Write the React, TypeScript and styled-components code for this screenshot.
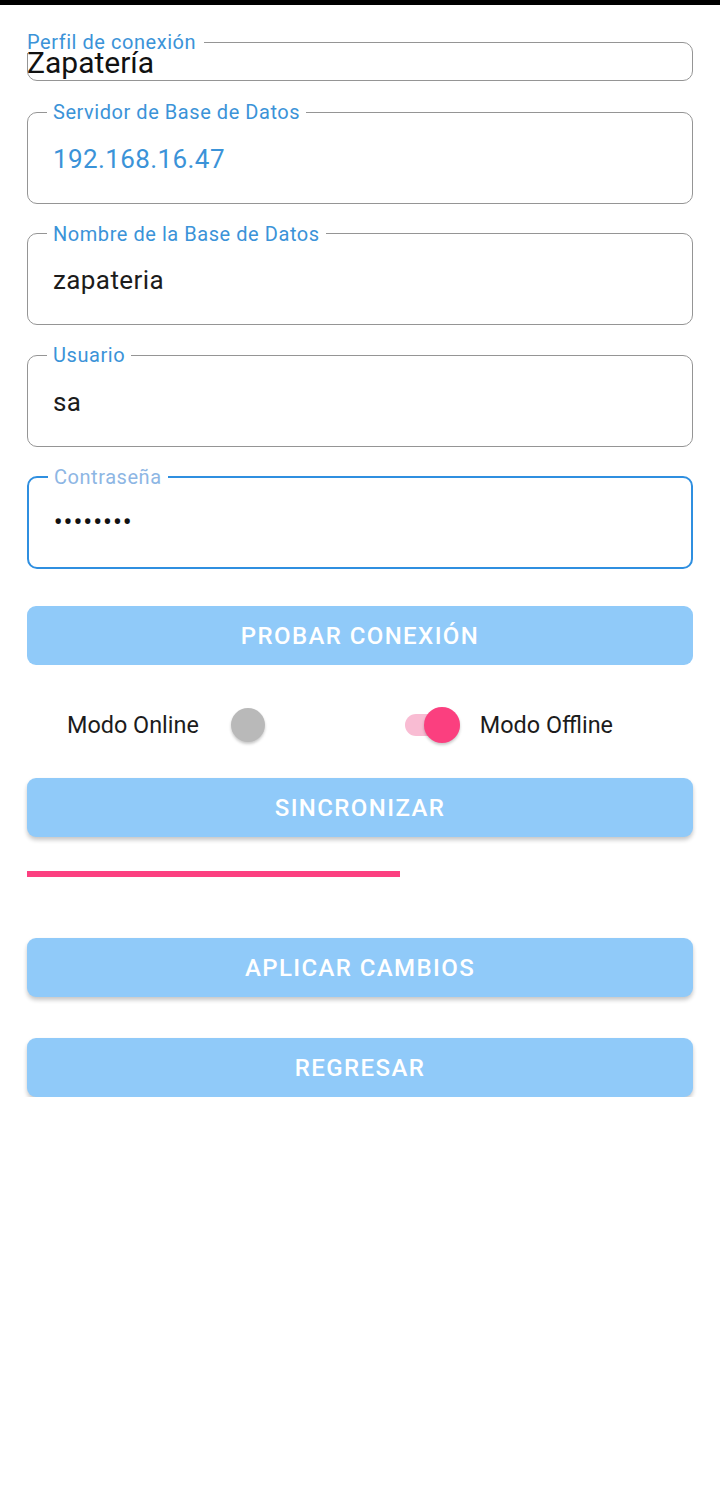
import React from 'react';
import styled, { createGlobalStyle } from 'styled-components';

const GlobalStyle = createGlobalStyle`
  html, body {
    margin: 0;
    padding: 0;
    background: #ffffff;
    font-family: Roboto, "Noto Sans", Arial, sans-serif;
  }
`;

const StatusStrip = styled.div`
  height: 5px;
  background: #000000;
`;

const Page = styled.div`
  padding: 26px 27px 0;
  display: flex;
  flex-direction: column;
`;

const Field = styled.fieldset<{ $focused?: boolean; $gap: number }>`
  margin: 0 0 ${(p) => p.$gap}px;
  padding: 0;
  min-width: 0;
  border: ${(p) => (p.$focused ? '2.5px solid #2f8fe0' : '1.5px solid #959595')};
  border-radius: 10px;
`;

const Legend = styled.legend<{ $faded?: boolean; $flush?: boolean }>`
  margin-left: ${(p) => (p.$flush ? '-1px' : '19px')};
  padding: ${(p) => (p.$flush ? '0 8px 0 0' : '0 6px')};
  font-size: 20px;
  line-height: 22px;
  color: ${(p) => (p.$faded ? '#8db6e4' : '#3b93d8')};
  letter-spacing: 0.55px;
`;

const Value = styled.div<{ $blue?: boolean }>`
  margin: 20.5px 0 29px;
  padding-left: 25px;
  font-size: 26px;
  line-height: 30px;
  color: ${(p) => (p.$blue ? '#3b93d8' : '#1c1c1c')};
  letter-spacing: 0.4px;
`;

const ProfileValue = styled.div`
  margin: -7px 0 0 -1px;
  font-size: 30px;
  line-height: 34px;
  color: #111111;
`;

const Dots = styled.div`
  margin: 20.5px 0 29px;
  padding-left: 25px;
  font-size: 23px;
  line-height: 30px;
  letter-spacing: 1.6px;
  font-weight: 700;
  color: #111111;
`;

const Button = styled.button<{ $raised?: boolean; $gap: number }>`
  height: 59px;
  margin: 0 0 ${(p) => p.$gap}px;
  border: none;
  border-radius: 9px;
  background: #90caf9;
  color: #ffffff;
  font-family: Roboto, "Noto Sans", Arial, sans-serif;
  font-size: 24px;
  font-weight: 500;
  letter-spacing: 1.4px;
  box-shadow: ${(p) => (p.$raised ? '0 3px 4px rgba(0, 0, 0, 0.22)' : 'none')};
`;

const ModeRow = styled.div`
  height: 40px;
  margin-bottom: 33px;
  padding: 0 80px 0 40px;
  display: flex;
  align-items: center;
  justify-content: space-between;
`;

const ModeGroup = styled.div<{ $gap: number }>`
  display: flex;
  align-items: center;
  gap: ${(p) => p.$gap}px;
`;

const ModeLabel = styled.span`
  font-size: 23.4px;
  color: #1c1c1c;
`;

const SwitchTrack = styled.div<{ $on?: boolean }>`
  width: 55px;
  height: 22px;
  border-radius: 11px;
  background: ${(p) => (p.$on ? '#f9bcd3' : 'transparent')};
  display: flex;
  align-items: center;
  justify-content: ${(p) => (p.$on ? 'flex-end' : 'flex-start')};
`;

const Thumb = styled.div<{ $on?: boolean }>`
  width: ${(p) => (p.$on ? 36 : 34)}px;
  height: ${(p) => (p.$on ? 36 : 34)}px;
  border-radius: 50%;
  background: ${(p) => (p.$on ? '#fb3f7f' : '#b9b9b9')};
  box-shadow: 0 2px 3px rgba(0, 0, 0, 0.22);
`;

const Progress = styled.div`
  height: 6px;
  margin-bottom: 61px;
`;

const ProgressFill = styled.div`
  height: 100%;
  background: #fc4080;
`;

const Toggle = ({ on }: { on?: boolean }) => (
  <SwitchTrack $on={on}>
    <Thumb $on={on} />
  </SwitchTrack>
);

export default function App() {
  const progress = 56;
  return (
    <>
      <GlobalStyle />
      <StatusStrip />
      <Page>
        <Field $gap={20}>
          <Legend $flush>Perfil de conexión</Legend>
          <ProfileValue>Zapatería</ProfileValue>
        </Field>
        <Field $gap={19}>
          <Legend>Servidor de Base de Datos</Legend>
          <Value $blue>192.168.16.47</Value>
        </Field>
        <Field $gap={19}>
          <Legend>Nombre de la Base de Datos</Legend>
          <Value>zapateria</Value>
        </Field>
        <Field $gap={19}>
          <Legend>Usuario</Legend>
          <Value>sa</Value>
        </Field>
        <Field $focused $gap={37}>
          <Legend $faded>Contraseña</Legend>
          <Dots>••••••••</Dots>
        </Field>
        <Button $gap={40}>PROBAR CONEXIÓN</Button>
        <ModeRow>
          <ModeGroup $gap={32}>
            <ModeLabel>Modo Online</ModeLabel>
            <Toggle />
          </ModeGroup>
          <ModeGroup $gap={20}>
            <Toggle on />
            <ModeLabel>Modo Offline</ModeLabel>
          </ModeGroup>
        </ModeRow>
        <Button $raised $gap={34}>SINCRONIZAR</Button>
        <Progress>
          <ProgressFill style={{ width: `${progress}%` }} />
        </Progress>
        <Button $raised $gap={41}>APLICAR CAMBIOS</Button>
        <Button $raised $gap={0}>REGRESAR</Button>
      </Page>
    </>
  );
}
